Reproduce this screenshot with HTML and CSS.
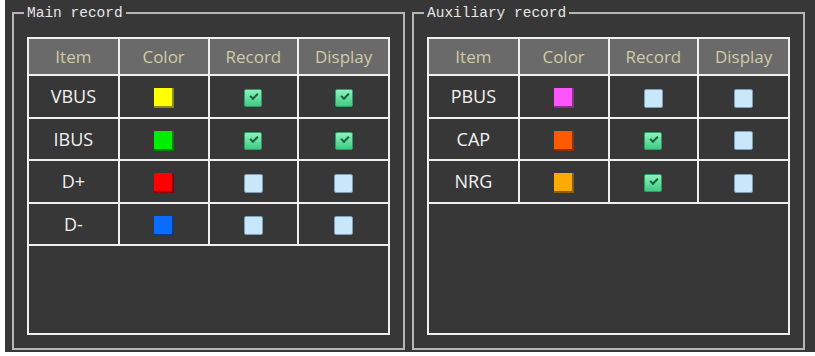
FILE: index.html
```html
<!DOCTYPE html>
<html lang="en">
<head>
    <meta charset="UTF-8">
    <title>Record settings</title>
    <link rel="stylesheet" href="styles.css">
</head>
<body>
    <div class="screen">
        <fieldset class="group">
            <legend>Main record</legend>
            <div class="grid-frame">
                <table class="record-table">
                    <tr class="head">
                        <th>Item</th><th>Color</th><th>Record</th><th>Display</th>
                    </tr>
                    <tr>
                        <td>VBUS</td>
                        <td><span class="swatch yellow"></span></td>
                        <td><span class="check on"></span></td>
                        <td><span class="check on"></span></td>
                    </tr>
                    <tr>
                        <td>IBUS</td>
                        <td><span class="swatch green"></span></td>
                        <td><span class="check on"></span></td>
                        <td><span class="check on"></span></td>
                    </tr>
                    <tr>
                        <td>D+</td>
                        <td><span class="swatch red"></span></td>
                        <td><span class="check"></span></td>
                        <td><span class="check"></span></td>
                    </tr>
                    <tr>
                        <td>D-</td>
                        <td><span class="swatch blue"></span></td>
                        <td><span class="check"></span></td>
                        <td><span class="check"></span></td>
                    </tr>
                </table>
            </div>
        </fieldset>

        <fieldset class="group">
            <legend>Auxiliary record</legend>
            <div class="grid-frame">
                <table class="record-table">
                    <tr class="head">
                        <th>Item</th><th>Color</th><th>Record</th><th>Display</th>
                    </tr>
                    <tr>
                        <td>PBUS</td>
                        <td><span class="swatch magenta"></span></td>
                        <td><span class="check"></span></td>
                        <td><span class="check"></span></td>
                    </tr>
                    <tr>
                        <td>CAP</td>
                        <td><span class="swatch vermilion"></span></td>
                        <td><span class="check on"></span></td>
                        <td><span class="check"></span></td>
                    </tr>
                    <tr>
                        <td>NRG</td>
                        <td><span class="swatch orange"></span></td>
                        <td><span class="check on"></span></td>
                        <td><span class="check"></span></td>
                    </tr>
                </table>
            </div>
        </fieldset>
    </div>
</body>
</html>
```

FILE: styles.css
```css
body {
    margin: 0;
    background-color: #ffffff;
    font-family: "Open Sans", "Noto Sans", sans-serif;
}

.screen {
    margin-left: 5px;
    width: 810px;
    height: 352px;
    box-sizing: border-box;
    padding: 5px 10px 2px 7px;
    background-color: #373737; /* panel background */
    display: flex;
    gap: 7px;
}

/* Group boxes */
.group {
    margin: 0;
    width: 393px;
    box-sizing: border-box;
    border: 2px solid #b6b6b6;
    padding: 16px 13px 13px 13px;
    min-width: 0;
}

.group legend {
    margin-left: -3px;
    padding: 0 3px;
    font-family: "Liberation Mono", "DejaVu Sans Mono", monospace;
    font-size: 14.5px;
    line-height: 16px;
    color: #e6e6e6;
}

/* Table */
.grid-frame {
    height: 298px;
    box-sizing: border-box;
    border: 2px solid #f0f0f0;
}

.record-table {
    width: 100%;
    table-layout: fixed;
    border-collapse: collapse;
}

.record-table th,
.record-table td {
    border-right: 2px solid #f0f0f0;
    border-bottom: 2px solid #f0f0f0;
    text-align: center;
    vertical-align: middle;
    padding: 0;
    font-size: 17px;
}

.record-table th:last-child,
.record-table td:last-child {
    border-right: none;
}

.record-table th {
    height: 35px;
    background-color: #6a6a6a;
    color: #cfcba4; /* khaki header text */
    font-weight: normal;
}

.record-table td {
    height: 40.5px;
    font-size: 18px;
    font-weight: 500;
    color: #f2f2f2;
}

/* Colour swatches */
.swatch {
    display: inline-block;
    width: 20px;
    height: 20px;
    box-sizing: border-box;
    vertical-align: middle;
    border-right: 2px solid rgba(0, 0, 0, 0.45);
    border-bottom: 2px solid rgba(0, 0, 0, 0.45);
}

.yellow { background-color: #ffff00; }
.green { background-color: #00ee00; }
.red { background-color: #ff0000; }
.blue { background-color: #0a6cff; }
.magenta { background-color: #ff55ff; }
.vermilion { background-color: #ff5a00; }
.orange { background-color: #ffaa00; }

/* Checkboxes */
.check {
    display: inline-block;
    width: 19px;
    height: 19px;
    box-sizing: border-box;
    vertical-align: middle;
    background-color: #c9e7fb;
    border: 1px solid #7f9db3;
    border-radius: 2px;
    position: relative;
}

.check.on {
    width: 18px;
    height: 18px;
    background: linear-gradient(#8ff0bd, #3fcb84);
    border-color: #2f9e63;
}

.check.on::after {
    content: "";
    position: absolute;
    left: 5px;
    top: 3px;
    width: 6px;
    height: 3px;
    border-left: 2px solid #17603a;
    border-bottom: 2px solid #17603a;
    transform: rotate(-45deg);
}
```
